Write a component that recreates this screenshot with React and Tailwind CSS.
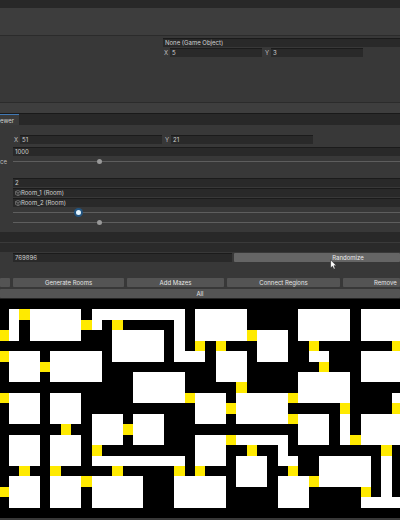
import React from "react";

const CELL_W = 10.34;
const CELL_H = 10.44;

// Each room or corridor: column, row, columns wide, rows high.
const rooms = [
  [1, 1, 1, 3], [3, 1, 5, 3], [9, 1, 9, 1], [9, 2, 1, 1], [11, 3, 5, 3],
  [17, 1, 1, 5], [17, 5, 3, 1], [1, 5, 3, 3], [5, 5, 5, 3], [1, 9, 3, 3],
  [5, 9, 3, 3], [13, 7, 5, 3], [19, 1, 5, 3], [25, 3, 3, 3], [21, 5, 3, 3],
  [19, 9, 3, 3], [23, 9, 5, 3], [29, 1, 5, 3], [35, 1, 5, 3], [30, 5, 2, 1],
  [29, 7, 5, 3], [35, 5, 5, 3], [38, 9, 2, 1], [29, 11, 3, 3], [33, 11, 1, 3],
  [35, 11, 5, 3], [37, 15, 1, 4], [35, 19, 5, 1], [31, 15, 5, 3], [27, 17, 3, 3],
  [23, 13, 5, 1], [27, 14, 1, 1], [27, 15, 2, 1], [23, 15, 3, 3], [13, 11, 3, 3],
  [9, 11, 3, 3], [9, 15, 9, 1], [9, 17, 5, 3], [5, 17, 3, 3], [5, 13, 3, 3],
  [1, 13, 3, 3], [1, 17, 3, 3], [17, 17, 5, 3], [19, 13, 3, 3],
];

const doors = [
  [2, 1], [8, 2], [11, 2], [0, 3], [0, 5], [4, 6], [0, 9], [19, 4], [21, 4],
  [24, 3], [23, 8], [18, 9], [22, 10], [30, 4], [38, 4], [31, 6], [28, 9],
  [33, 10], [38, 10], [28, 11], [34, 13], [37, 14], [35, 18], [30, 17],
  [28, 16], [12, 12], [9, 14], [17, 16], [11, 16], [8, 17], [5, 16], [6, 12],
  [2, 16], [0, 18], [19, 16], [22, 13], [24, 14],
];

const field =
  "block h-[9px] min-w-0 border-t border-[#1b1b1b] bg-[#292929] px-[2px] pb-px text-[6px] leading-[7px] text-[#d0d0d0] outline-none";
const button =
  "block h-[9px] min-w-0 overflow-hidden whitespace-nowrap rounded-[1px] bg-[#545454] text-center text-[6px] leading-[9px] text-[#e4e4e4]";
const range =
  "block h-[9px] w-full appearance-none bg-transparent outline-none [&::-webkit-slider-runnable-track]:h-px [&::-webkit-slider-runnable-track]:bg-[#5e5e5e] [&::-webkit-slider-thumb]:-mt-[2px] [&::-webkit-slider-thumb]:size-[5px] [&::-webkit-slider-thumb]:appearance-none [&::-webkit-slider-thumb]:rounded-full";
const idleThumb = "[&::-webkit-slider-thumb]:bg-[#999999]";
const activeThumb =
  "[&::-webkit-slider-thumb]:bg-[#e4f4ff] [&::-webkit-slider-thumb]:shadow-[0_0_0_2px_#23547f]";

function Axis({ name, value, group }) {
  return (
    <label className="flex h-[9px] items-center text-[6px] leading-[9px] text-[#bcbcbc]">
      <span className="w-[6px]">{name}</span>
      <input aria-label={`${group} ${name}`} defaultValue={value} className={`${field} flex-1`} />
    </label>
  );
}

function ObjectField({ name }) {
  return (
    <div className="flex h-[9px] items-center border-t border-[#1b1b1b] bg-[#292929] pl-[2px]">
      <svg viewBox="0 0 10 10" className="size-[6px] shrink-0" fill="none" stroke="#858585" strokeWidth="1.2">
        <path d="M1 2.5 5 .8l4 1.7v5L5 9.3 1 7.5zM1 2.5 5 5l4-2.5M5 5v4" />
      </svg>
      <input aria-label={name} defaultValue={name} className="block h-[8px] min-w-0 flex-1 bg-transparent text-[6px] leading-[8px] text-[#d0d0d0] outline-none" />
    </div>
  );
}

function DungeonMap() {
  return (
    <svg className="block h-[219px] w-full bg-black" viewBox="0 0 400 219" preserveAspectRatio="none" shapeRendering="crispEdges" role="img" aria-label="Dungeon map">
      <g transform="translate(-1.4 -0.1)">
        {rooms.map(([c, r, w, h]) => (
          <rect key={`${c}-${r}-${w}`} x={c * CELL_W} y={r * CELL_H} width={w * CELL_W} height={h * CELL_H} fill="#fff" />
        ))}
        {doors.map(([c, r]) => (
          <rect key={`${c}-${r}`} x={c * CELL_W} y={r * CELL_H} width={CELL_W} height={CELL_H} fill="#ffea00" />
        ))}
      </g>
    </svg>
  );
}

export default function App() {
  return (
    <main className="min-h-screen w-full overflow-hidden bg-[#383838] font-['Inter',sans-serif]">
      <div className="h-2 bg-[#282828]" />
      <div className="h-[27px] bg-[#3d3d3d]" />
      <section className="h-[67px] border-t border-[#2b2b2b] pt-[2px] pl-[163px]">
        <input aria-label="Game Object" defaultValue="None (Game Object)" className={`${field} w-full`} />
        <div className="mt-px grid grid-cols-[98px_98px] gap-[3px] pl-px">
          <Axis group="Room" name="X" value="5" />
          <Axis group="Room" name="Y" value="3" />
        </div>
      </section>
      <div className="h-[11px] border-t border-[#2b2b2b] bg-[#3e3e3e]" />
      <nav className="flex h-[12px] border-t border-[#191919] bg-[#282828]">
        <button className="flex h-[11px] w-[19px] items-center border-t border-[#4179b5] bg-[#3b3b3b] text-[6px] leading-[9px] text-[#d0d0d0]">
          ewer
        </button>
      </nav>

      <section className="pt-[10px]">
        <div className="grid grid-cols-[148px_148px] gap-[3px] pl-[14px]">
          <Axis group="Size" name="X" value="51" />
          <Axis group="Size" name="Y" value="21" />
        </div>
        <div className="mt-[3px] pl-[13px]">
          <input aria-label="Attempts" defaultValue="1000" className={`${field} w-full`} />
        </div>
        <label className="mt-px flex h-[9px] items-center text-[6px] leading-[9px] text-[#bcbcbc]">
          <span className="w-[13px] shrink-0">ce</span>
          <input type="range" min="0" max="1000" defaultValue="220" className={`${range} ${idleThumb}`} />
        </label>
        <div className="mt-[12px] flex flex-col gap-px pl-[13px]">
          <input aria-label="Room count" defaultValue="2" className={`${field} w-full`} />
          <ObjectField name="Room_1 (Room)" />
          <ObjectField name="Room_2 (Room)" />
          <input type="range" aria-label="Winding" min="0" max="1000" defaultValue="165" className={`${range} ${activeThumb}`} />
          <input type="range" aria-label="Loops" min="0" max="1000" defaultValue="220" className={`${range} ${idleThumb}`} />
        </div>
      </section>

      <div className="mt-[5px] h-[10px] bg-[#282828]" />
      <div className="h-[10px] border-t border-[#3a3a3a] bg-[#2a2a2a]" />

      <section className="bg-[#383838] pt-px">
        <div className="flex gap-[2px] pl-[13px]">
          <input aria-label="Seed" defaultValue="769896" className={`${field} w-[219px]`} />
          <div className="relative min-w-0 flex-1">
            <button className="block h-[9px] w-full overflow-hidden rounded-[1px] bg-[#656565] pl-[62px] text-center text-[6px] leading-[9px] text-[#ececec]">
              Randomize
            </button>
            <svg viewBox="0 0 12 18" className="absolute top-[6px] left-[96px] h-[11px] w-[7px]">
              <path d="M1 1v14l3.3-3 2.2 5 2.5-1.1L6.8 11H11z" fill="#fff" stroke="#222" strokeWidth="1" />
            </svg>
          </div>
        </div>
        <div className="mt-[16px] grid grid-cols-[10px_111px_97px_113px_1fr] gap-[3px]">
          <button aria-label="Clear" className={button} />
          <button className={button}>Generate Rooms</button>
          <button className={button}>Add Mazes</button>
          <button className={button}>Connect Regions</button>
          <button className={`${button} pl-[31px] text-left`}>Remove</button>
        </div>
        <button className={`${button} mt-[2px] w-full`}>All</button>
        <div className="h-px bg-[#242424]" />
      </section>
      <DungeonMap />
    </main>
  );
}
